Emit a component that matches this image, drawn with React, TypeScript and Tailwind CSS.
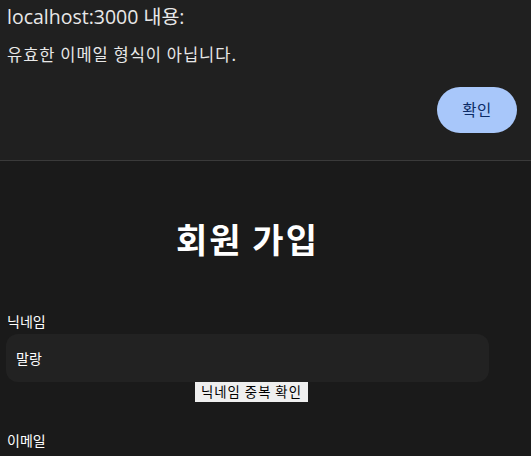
import React from "react";

const kr = { fontFamily: '"Noto Sans CJK KR", "Noto Sans", sans-serif' };

export default function App() {
  return (
    <div className="min-h-[456px] w-[531px] overflow-hidden bg-[#1a1a1a]" style={kr}>
      <div className="h-[161px] border-b border-[#3a3a3a] bg-[#202020] pl-[7px] pr-[14px] flex flex-col">
        <div
          className="mt-[5px] text-[19.5px] leading-[24px] text-[#e8e8e8]"
          style={{ fontFamily: '"Open Sans", "Noto Sans CJK KR", sans-serif' }}
        >
          localhost:3000 내용:
        </div>
        <div className="mt-[14px] text-[16.5px] leading-[22px] tracking-[1px] text-[#e8e8e8]">
          유효한 이메일 형식이 아닙니다.
        </div>
        <div className="mt-[22px] flex justify-end">
          <button className="h-[46px] w-[80px] rounded-full bg-[#a8c7fa] text-[15.5px] tracking-[0.5px] text-[#0b2b66]">
            확인
          </button>
        </div>
      </div>
      <div className="w-[495px] px-[6px]">
        <h1 className="mt-[54px] text-center text-[34px] font-bold leading-[48px] tracking-[2px] text-white">
          회원 가입
        </h1>
        <div className="mt-[48px] pl-[1px] text-[14px] leading-[20px] text-white">닉네임</div>
        <div className="mt-[3px] flex h-[48px] items-center rounded-[12px] bg-[#222222] px-[10px] text-[14px] text-white">
          말랑
        </div>
        <div className="flex justify-center pl-[8px]">
          <button className="h-[20px] bg-[#efefef] px-[6px] text-[13.33px] leading-[20px] tracking-[1px] text-black">
            닉네임 중복 확인
          </button>
        </div>
        <div className="mt-[28px] pl-[1px] text-[14px] leading-[20px] text-white">이메일</div>
      </div>
    </div>
  );
}
